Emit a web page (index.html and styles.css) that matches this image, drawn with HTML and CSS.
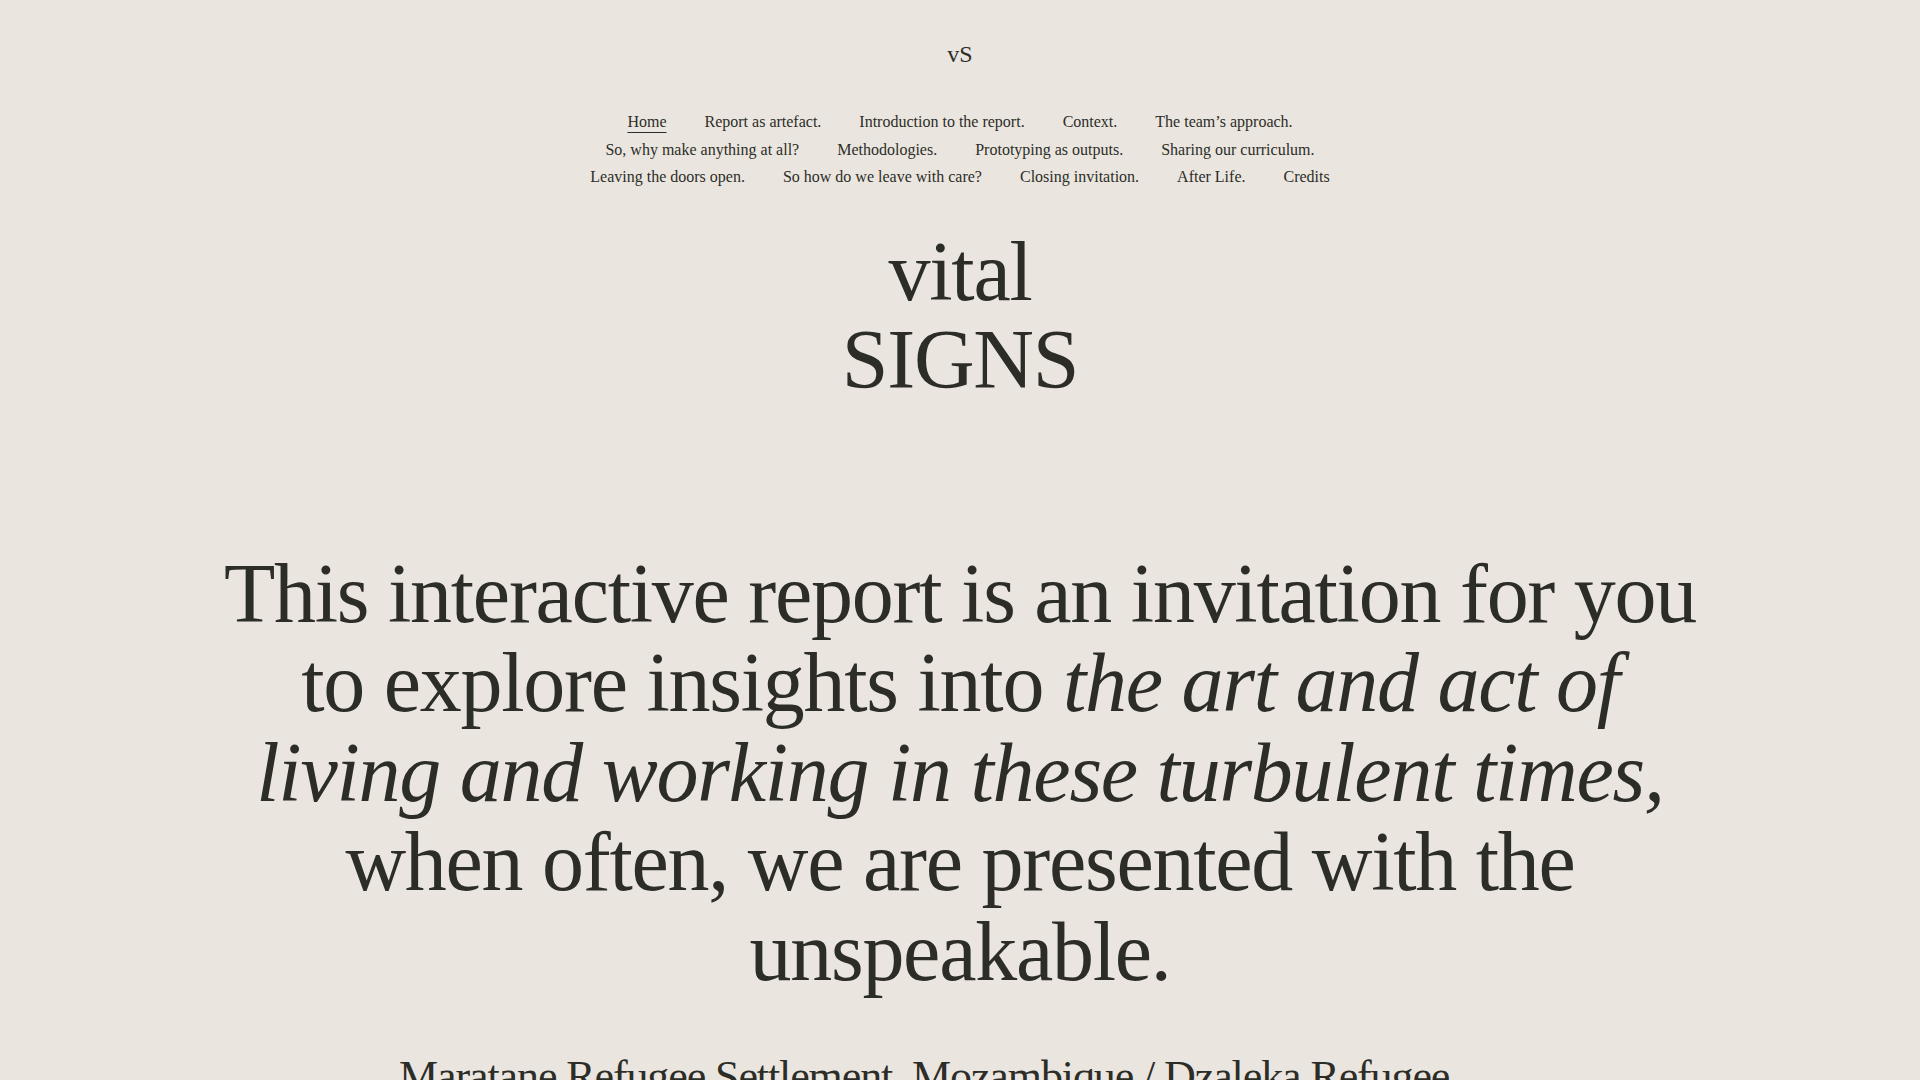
FILE: index.html
```html
<!DOCTYPE html>
<html lang="en">
<head>
<meta charset="utf-8">
<title>vital SIGNS</title>
<link rel="stylesheet" href="styles.css">
</head>
<body>
<header class="site-header">
  <div class="logo">vS</div>
  <nav class="nav">
    <ul class="nav-list">
      <li><a class="active" href="#">Home</a></li>
      <li><a href="#">Report as artefact.</a></li>
      <li><a href="#">Introduction to the report.</a></li>
      <li><a href="#">Context.</a></li>
      <li><a href="#">The team’s approach.</a></li>
      <li><a href="#">So, why make anything at all?</a></li>
      <li><a href="#">Methodologies.</a></li>
      <li><a href="#">Prototyping as outputs.</a></li>
      <li><a href="#">Sharing our curriculum.</a></li>
      <li><a href="#">Leaving the doors open.</a></li>
      <li><a href="#">So how do we leave with care?</a></li>
      <li><a href="#">Closing invitation.</a></li>
      <li><a href="#">After Life.</a></li>
      <li><a href="#">Credits</a></li>
    </ul>
  </nav>
</header>
<main>
  <h1 class="title">vital<br>SIGNS</h1>
  <p class="intro">This interactive report is an invitation for you to explore insights into <em>the art and act of living and working in these turbulent times,</em> when often, we are presented with the unspeakable.</p>
  <p class="location">Maratane Refugee Settlement, Mozambique / Dzaleka Refugee Camp, Malawi</p>
</main>
</body>
</html>
```

FILE: styles.css
```css
html, body {
  margin: 0;
  padding: 0;
}

body {
  background: #eae6df;
  color: #2d2d28;
  font-family: "Liberation Serif", "Times New Roman", serif;
}

.site-header {
  padding-top: 42px;
  text-align: center;
}

.logo {
  font-size: 24px;
  line-height: 24px;
}

.nav {
  max-width: 800px;
  margin: 42px auto 0;
}

.nav-list {
  list-style: none;
  margin: 0;
  padding: 0;
  display: flex;
  flex-wrap: wrap;
  justify-content: center;
  column-gap: 38px;
  font-size: 16px;
  line-height: 27.5px;
}

.nav-list a {
  color: inherit;
  text-decoration: none;
}

.nav-list a.active {
  text-decoration: underline;
  text-decoration-thickness: 1px;
  text-underline-offset: 5px;
}

.title {
  margin: 37px 0 0;
  font-size: 84px;
  line-height: 88px;
  font-weight: 400;
  letter-spacing: -0.015em;
  text-align: center;
}

.intro {
  max-width: 1496px;
  margin: 145px auto 0;
  font-size: 84px;
  line-height: 89.5px;
  letter-spacing: -0.015em;
  text-align: center;
}

.intro em {
  font-style: italic;
}

.location {
  max-width: 1122px;
  margin: 54.5px auto 0;
  font-size: 44px;
  line-height: 52.8px;
  letter-spacing: -0.025em;
  text-align: left;
}
```
